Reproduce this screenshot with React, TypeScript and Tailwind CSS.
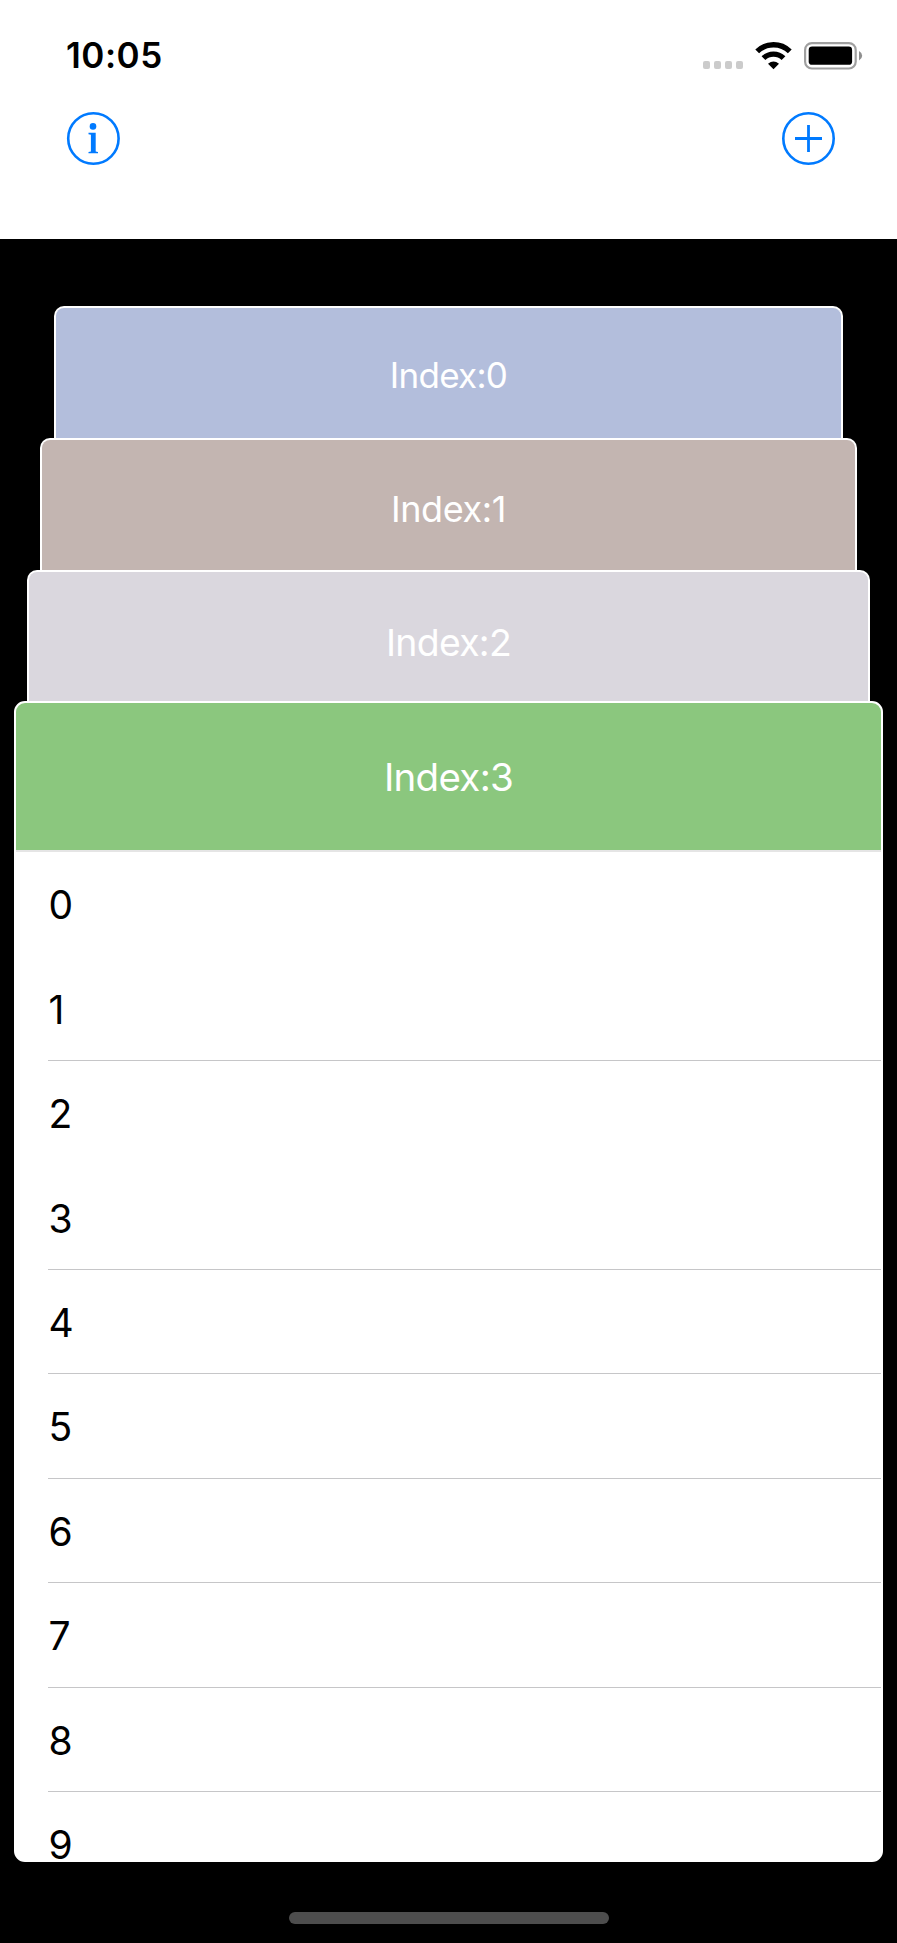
import React from "react";

type StackedCard = { label: string; frame: string; header: string };

const stackedCards: StackedCard[] = [
  {
    label: "Index:0",
    frame: "h-[132px] w-[789px] bg-[#b3bedc]",
    header: "h-[135px] text-[35px] tracking-[-0.7px]",
  },
  {
    label: "Index:1",
    frame: "h-[132px] w-[817px] bg-[#c3b5b1]",
    header: "h-[138px] text-[36px] tracking-[-0.4px]",
  },
  {
    label: "Index:2",
    frame: "h-[131px] w-[843px] bg-[#dad7de]",
    header: "h-[143px] text-[37.4px] tracking-[-0.7px]",
  },
];

const rows = [0, 1, 2, 3, 4, 5, 6, 7, 8, 9];
const rowsWithoutSeparator = [0, 2];

function WifiIcon() {
  return (
    <svg className="h-7 w-[37px]" viewBox="0 0 37 28" fill="none">
      <path d="M2.2 9.4 A23.2 23.2 0 0 1 34.8 9.4" stroke="#000" strokeWidth="5.4" />
      <path d="M8.5 16.2 A14.2 14.2 0 0 1 28.5 16.2" stroke="#000" strokeWidth="5.4" />
      <path d="M13 21.8 Q18.5 17 24 21.8 L18.5 27.2 Z" fill="#000" />
    </svg>
  );
}

function BatteryIcon() {
  return (
    <svg className="h-7 w-[59px]" viewBox="0 0 59 28" fill="none">
      <rect x="1.1" y="1.1" width="50.6" height="25.4" rx="6.8" stroke="#a0a0a0" strokeWidth="2.2" />
      <rect x="4.7" y="4.6" width="43.4" height="18.2" rx="3.4" fill="#000" />
      <path d="M55 9 Q58.2 10.8 58.2 13.7 Q58.2 16.6 55 18.4 Z" fill="#8f8f8f" />
    </svg>
  );
}

function InfoIcon() {
  return (
    <svg className="size-[54px]" viewBox="0 0 54 54" fill="none">
      <circle cx="27.4" cy="27.5" r="25.2" stroke="#007aff" strokeWidth="2.6" />
      <circle cx="27" cy="15.4" r="3.3" fill="#007aff" />
      <path d="M22.5 21.7 H29.7 V40.5 L32 40.9 V42.3 H22.5 V40.9 L24.9 40.5 V23.7 L22.5 23.2 Z" fill="#007aff" />
    </svg>
  );
}

function AddIcon() {
  return (
    <svg className="size-[54px]" viewBox="0 0 54 54" fill="none">
      <circle cx="27.5" cy="27.5" r="25.2" stroke="#007aff" strokeWidth="2.6" />
      <path d="M14 27.5 H41 M27.5 14 V41" stroke="#007aff" strokeWidth="2.8" />
    </svg>
  );
}

export default function App() {
  return (
    <div className="flex h-[1943px] w-[897px] flex-col overflow-hidden bg-black font-['Inter',sans-serif]">
      <header className="h-[239px] shrink-0 bg-white">
        <div className="flex h-[111px] items-center justify-between pr-[34px] pl-[66px]">
          <time className="text-[35px] leading-none font-semibold tracking-[0.5px] text-black">10:05</time>
          <div className="flex h-7 items-center">
            <div className="mr-3 flex gap-[3.5px] self-end pb-px">
              {[0, 1, 2, 3].map((dot) => (
                <span key={dot} className="size-[7.5px] rounded-[2px] bg-[#cbcbcb]" />
              ))}
            </div>
            <WifiIcon />
            <div className="w-3" />
            <BatteryIcon />
          </div>
        </div>
        <nav className="flex justify-between pr-[62px] pl-[66px]">
          <button aria-label="Info">
            <InfoIcon />
          </button>
          <button aria-label="Add">
            <AddIcon />
          </button>
        </nav>
      </header>

      <main className="flex flex-col items-center pt-[67px]">
        {stackedCards.map((card) => (
          <section
            key={card.label}
            className={`overflow-hidden rounded-t-[10px] border-x-2 border-t-2 border-white ${card.frame}`}
          >
            <h2 className={`flex items-center justify-center text-white ${card.header}`}>{card.label}</h2>
          </section>
        ))}

        <section className="h-[1161px] w-[869px] overflow-hidden rounded-[11px] border-2 border-white bg-white">
          <h2 className="flex h-[149px] items-center justify-center border-b-2 border-[#e5e5e5] bg-[#8bc77e] pt-0.5 text-[38.5px] tracking-[-0.7px] text-white">
            {"Index:3"}
          </h2>
          <ul className="pl-8">
            {rows.map((row) => (
              <li
                key={row}
                className={`flex h-[104.45px] items-center border-b pt-0.5 pl-[0.5px] text-[39px] leading-none text-black ${
                  rowsWithoutSeparator.includes(row) ? "border-transparent" : "border-[#c6c6c8]"
                }`}
              >
                {row}
              </li>
            ))}
          </ul>
        </section>
      </main>

      <div className="mt-[50px] h-3 w-[320px] self-center rounded-full bg-[#4d4d4d]" />
    </div>
  );
}
